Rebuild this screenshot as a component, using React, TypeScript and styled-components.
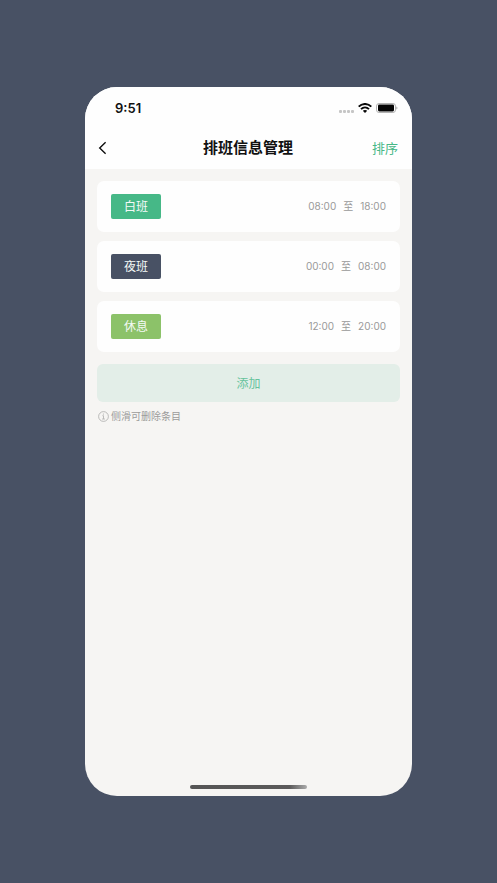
import React from 'react';
import styled, { createGlobalStyle } from 'styled-components';

const GlobalStyle = createGlobalStyle`
  * { box-sizing: border-box; }
  body {
    margin: 0;
    background: #485164;
    font-family: Inter, "Noto Sans CJK SC", sans-serif;
  }
  button { font-family: inherit; border: 0; padding: 0; cursor: pointer; }
`;

const Page = styled.div`
  display: flex;
  min-height: 100vh;
  padding: 87px 85px;
  background: #485164;
`;

const Phone = styled.main`
  display: flex;
  flex: 1;
  flex-direction: column;
  overflow: hidden;
  border-radius: 32px;
  background: #f6f5f3;
`;

const Header = styled.header`
  background: #fefefe;
`;

const StatusBar = styled.div`
  display: flex;
  align-items: center;
  justify-content: space-between;
  height: 42px;
  padding: 0 14px 0 30px;
`;

const Clock = styled.time`
  color: #111;
  font-size: 13px;
  font-weight: 600;
  line-height: 20px;
`;

const StatusIcons = styled.div`
  display: flex;
  align-items: center;
  gap: 4px;

  svg { display: block; }
`;

const NavBar = styled.nav`
  display: grid;
  grid-template-columns: 1fr auto 1fr;
  align-items: center;
  height: 40px;
  padding: 0 14px 2px 13px;
`;

const BackButton = styled.button`
  display: flex;
  justify-self: start;
  background: none;
`;

const Title = styled.h1`
  margin: 0;
  color: #111;
  font-size: 15px;
  font-weight: 700;
  line-height: 20px;
`;

const SortButton = styled.button`
  justify-self: end;
  background: none;
  color: #46b887;
  font-size: 13px;
  line-height: 20px;
`;

const Content = styled.section`
  flex: 1;
  padding: 12px;
`;

const ShiftList = styled.ul`
  display: flex;
  flex-direction: column;
  gap: 9px;
  margin: 0;
  padding: 0;
  list-style: none;
`;

const ShiftCard = styled.li`
  display: flex;
  align-items: center;
  justify-content: space-between;
  height: 51px;
  padding: 0 14px;
  border-radius: 7px;
  background: #fefefe;
`;

const ShiftTag = styled.span<{ $color: string }>`
  width: 50px;
  border-radius: 2px;
  background: ${({ $color }) => $color};
  color: #f4faf7;
  font-size: 12px;
  line-height: 25px;
  text-align: center;
`;

const ShiftTime = styled.span`
  display: flex;
  gap: 7px;
  color: #999;
  font-size: 10px;
  line-height: 15px;
`;

const AddButton = styled.button`
  display: block;
  width: 100%;
  margin-top: 12px;
  padding: 10px 0 8px;
  border-radius: 6px;
  background: #e3eee8;
  color: #66c39c;
  font-size: 12px;
  line-height: 20px;
`;

const Hint = styled.p`
  display: flex;
  align-items: center;
  gap: 2px;
  margin: 6px 0 0;
  padding-left: 1px;
  color: #9c9c9b;
  font-size: 10px;
  line-height: 16px;
`;

const HomeIndicator = styled.div`
  align-self: center;
  width: 36%;
  height: 4px;
  margin-bottom: 7px;
  border-radius: 2px;
  background: linear-gradient(90deg, #555 0%, #5b5a5a 85%, #aaa 100%);
`;

const shifts = [
  { name: '白班', color: '#46b887', start: '08:00', end: '18:00' },
  { name: '夜班', color: '#485164', start: '00:00', end: '08:00' },
  { name: '休息', color: '#8cc269', start: '12:00', end: '20:00' },
];

const SignalIcon = () => (
  <svg width="15" height="12" viewBox="0 0 15 12" fill="#c6c6c6" aria-hidden="true">
    <rect x="0" y="8" width="3" height="3" rx="1" />
    <rect x="4" y="8" width="3" height="3" rx="1" />
    <rect x="8" y="8" width="3" height="3" rx="1" />
    <rect x="12" y="8" width="3" height="3" rx="1" />
  </svg>
);

const WifiIcon = () => (
  <svg width="14" height="10" viewBox="0 0 14 10" fill="none" stroke="#080808" strokeWidth="1.9" aria-hidden="true">
    <path d="M.7 3.7C4.3 0 9.7 0 13.3 3.7" />
    <path d="M3 6.1c2.3-2.2 5.7-2.2 8 0" />
    <path d="M4.8 7.8c1.2-1.1 3.2-1.1 4.4 0L7 10z" fill="#080808" stroke="none" />
  </svg>
);

const BatteryIcon = () => (
  <svg width="22" height="10" viewBox="0 0 22 10" aria-hidden="true">
    <rect x=".5" y=".5" width="19" height="9" rx="2.6" fill="#fff" stroke="#b2b2b2" />
    <rect x="2" y="1.6" width="16" height="6.8" rx="1.3" fill="#050505" />
    <path d="M20.3 3.5c1.5.4 1.5 2.6 0 3z" fill="#a8a8a8" />
  </svg>
);

const BackIcon = () => (
  <svg width="9" height="14" viewBox="0 0 9 14" fill="none" stroke="#111" strokeWidth="1.4" aria-hidden="true">
    <path d="M7.6 1.2 1.7 7l5.9 5.8" />
  </svg>
);

const InfoIcon = () => (
  <svg width="11" height="11" viewBox="0 0 11 11" fill="none" stroke="#acacab" strokeWidth=".8" aria-hidden="true">
    <circle cx="5.5" cy="5.5" r="4.9" />
    <path d="M4.4 4.7h1.1v3.2M4.1 8h2.8" />
    <circle cx="5.4" cy="3" r=".6" fill="#acacab" stroke="none" />
  </svg>
);

export default function App() {
  return (
    <>
      <GlobalStyle />
      <Page>
        <Phone>
          <Header>
            <StatusBar>
              <Clock>9:51</Clock>
              <StatusIcons>
                <SignalIcon />
                <WifiIcon />
                <BatteryIcon />
              </StatusIcons>
            </StatusBar>
            <NavBar>
              <BackButton type="button" aria-label="返回"><BackIcon /></BackButton>
              <Title>排班信息管理</Title>
              <SortButton type="button">排序</SortButton>
            </NavBar>
          </Header>
          <Content>
            <ShiftList>
              {shifts.map((shift) => (
                <ShiftCard key={shift.name}>
                  <ShiftTag $color={shift.color}>{shift.name}</ShiftTag>
                  <ShiftTime>
                    <time>{shift.start}</time>
                    <span>至</span>
                    <time>{shift.end}</time>
                  </ShiftTime>
                </ShiftCard>
              ))}
            </ShiftList>
            <AddButton type="button">添加</AddButton>
            <Hint><InfoIcon />侧滑可删除条目</Hint>
          </Content>
          <HomeIndicator />
        </Phone>
      </Page>
    </>
  );
}
